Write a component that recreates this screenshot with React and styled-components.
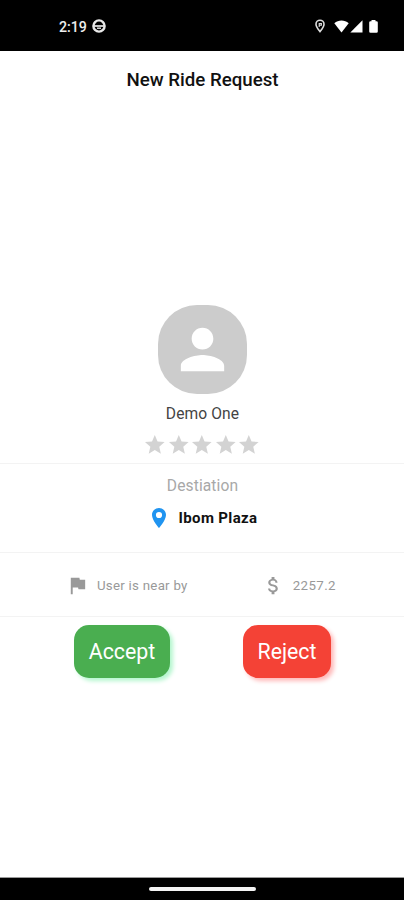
import React from "react";
import styled, { createGlobalStyle } from "styled-components";

const STAR = "M12 17.27L18.18 21l-1.64-7.03L22 9.24l-7.19-.61L12 2 9.19 8.63 2 9.24l5.46 4.73L5.82 21z";
const PERSON = "M12 12c2.21 0 4-1.79 4-4s-1.79-4-4-4-4 1.79-4 4 1.79 4 4 4zm0 2c-2.67 0-8 1.34-8 4v2h16v-2c0-2.66-5.33-4-8-4z";
const PLACE = "M12 2C8.13 2 5 5.13 5 9c0 5.25 7 13 7 13s7-7.75 7-13c0-3.87-3.13-7-7-7zm0 10.1a3.1 3.1 0 0 1 0-6.2 3.1 3.1 0 0 1 0 6.2z";
const FLAG = "M14.4 6L14 4H5v17h2v-7h5.6l.4 2h7V6z";
const MONEY = "M11.8 10.9c-2.27-.59-3-1.2-3-2.15 0-1.09 1.01-1.85 2.7-1.85 1.78 0 2.44.85 2.5 2.1h2.21c-.07-1.72-1.12-3.3-3.21-3.81V3h-3v2.16c-1.94.42-3.5 1.68-3.5 3.61 0 2.31 1.91 3.46 4.7 4.13 2.5.6 3 1.48 3 2.41 0 .69-.49 1.79-2.7 1.79-2.06 0-2.87-.92-2.98-2.1h-2.2c.12 2.19 1.76 3.42 3.68 3.83V21h3v-2.15c1.95-.37 3.5-1.5 3.5-3.55 0-2.84-2.43-3.81-4.7-4.4z";

function Icon ({ path, size, color }) {
    return (
        <svg width={size} height={size} viewBox="0 0 24 24" fill={color} fillRule="evenodd">
            <path d={path} />
        </svg>
    )
}

function StatusIcons () {
    return (
        <StatusGroup>
            <LocationIcon width="10" height="14" viewBox="0 0 10 14" fill="none" stroke="#DDDDDD" strokeWidth="1.6">
                <path d="M5 12.6C3.4 10.5 1 7.8 1 5.2a4 4 0 0 1 8 0C9 7.8 6.6 10.5 5 12.6z" />
                <path d="M4.2 8V4.6h2.2v1.6H4.6" strokeWidth="1.1" />
            </LocationIcon>
            <svg width="15" height="13" viewBox="0 0 15 13" fill="#FFFFFF">
                <path d="M.3 3.3C4.4-.4 10.6-.4 14.7 3.3L7.5 12.5z" />
            </svg>
            <SignalIcon width="13" height="13" viewBox="0 0 13 13" fill="#FFFFFF">
                <path d="M12.5 .3v12.2H.3z" />
            </SignalIcon>
            <svg width="9" height="13" viewBox="0 0 9 13" fill="#FFFFFF">
                <path d="M2.5 0h4v1.2h1A1.3 1.3 0 0 1 8.8 2.5v9A1.3 1.3 0 0 1 7.5 12.8h-6A1.3 1.3 0 0 1 .2 11.5v-9A1.3 1.3 0 0 1 1.5 1.2h1z" />
            </svg>
        </StatusGroup>
    )
}

export default function App () {
    const stars = [1, 2, 3, 4, 5];

    return (
        <>
            <GlobalStyle />
            <Screen>
                <StatusBar>
                    <Clock>
                        <span>2:19</span>
                        <svg width="14" height="14" viewBox="0 0 14 14" fill="none" stroke="#E8E8E8">
                            <circle cx="7" cy="7" r="5.6" strokeWidth="2.4" />
                            <path d="M2 7h10" strokeWidth="1.7" />
                            <path d="M5 9.2h4" strokeWidth="1.4" />
                        </svg>
                    </Clock>
                    <StatusIcons />
                </StatusBar>
                <Header>New Ride Request</Header>
                <Content>
                    <Profile>
                        <Avatar>
                            <Icon path={PERSON} size={65} color="#FFFFFF" />
                        </Avatar>
                        <Name>Demo One</Name>
                        <Stars>
                            {stars.map(star => <Icon key={star} path={STAR} size={23.6} color="#D3D3D3" />)}
                        </Stars>
                    </Profile>
                    <Destination>
                        <Label>Destiation</Label>
                        <Place>
                            <Icon path={PLACE} size={24} color="#2094F0" />
                            <span>Ibom Plaza</span>
                        </Place>
                    </Destination>
                    <Details>
                        <Detail gap={8}>
                            <Icon path={FLAG} size={23} color="#999999" />
                            <DetailText spacing="0.25px">User is near by</DetailText>
                        </Detail>
                        <Detail gap={8}>
                            <Icon path={MONEY} size={23} color="#999999" />
                            <DetailText spacing="0.4px">2257.2</DetailText>
                        </Detail>
                    </Details>
                    <Actions>
                        <Button width={96} color="#4AAE50" shadow="#B4F6CE">Accept</Button>
                        <Button width={88} color="#F44236" shadow="#FFB9B9">Reject</Button>
                    </Actions>
                </Content>
                <NavBar>
                    <Handle />
                </NavBar>
            </Screen>
        </>
    )
}

const GlobalStyle = createGlobalStyle`
    * {
        box-sizing: border-box;
    }

    body {
        margin: 0;
        font-family: Roboto, sans-serif;
    }

    svg {
        display: block;
        flex-shrink: 0;
    }
`

const Screen = styled.div`
    width: 404px;
    height: 900px;
    background: #FFFFFF;
    display: flex;
    flex-direction: column;
    overflow: hidden;
`

const StatusBar = styled.div`
    height: 51px;
    flex-shrink: 0;
    padding: 1px 26px 0 59px;
    background: #000000;
    display: flex;
    align-items: center;
    justify-content: space-between;
`

const Clock = styled.div`
    display: flex;
    align-items: center;
    gap: 5px;
    font-weight: 500;
    font-size: 14.2px;
    line-height: 16px;
    color: #EEEEEE;

    span {
        padding-top: 1px;
    }
`

const StatusGroup = styled.div`
    display: flex;
    align-items: center;
`

const LocationIcon = styled.svg`
    margin-right: 9px;
`

const SignalIcon = styled.svg`
    margin: 0 6px 0 1px;
`

const Header = styled.div`
    height: 57px;
    flex-shrink: 0;
    padding: 1px 0 0 1px;
    font-weight: 500;
    font-size: 18.7px;
    line-height: 56px;
    text-align: center;
    color: #111111;
`

const Content = styled.div`
    flex: 1;
    padding-top: 197px;
`

const Profile = styled.div`
    height: 159px;
    display: flex;
    flex-direction: column;
    align-items: center;
    border-bottom: 1px solid #F3F3F3;
`

const Avatar = styled.div`
    width: 89px;
    height: 89px;
    border-radius: 39px;
    background: #CCCCCC;
    display: flex;
    align-items: center;
    justify-content: center;
`

const Name = styled.div`
    margin-top: 10px;
    padding-left: 1px;
    font-size: 15.6px;
    line-height: 20px;
    letter-spacing: 0.1px;
    color: #444444;
`

const Stars = styled.div`
    margin-top: 9px;
    display: flex;
`

const Destination = styled.div`
    height: 89px;
    padding-top: 12px;
    display: flex;
    flex-direction: column;
    align-items: center;
    border-bottom: 1px solid #F3F3F3;
`

const Label = styled.div`
    padding-left: 1px;
    font-size: 15.6px;
    line-height: 20px;
    letter-spacing: 0.1px;
    color: #A8A8A8;
`

const Place = styled.div`
    margin-top: 10px;
    display: flex;
    align-items: center;
    gap: 8px;
    font-weight: 700;
    font-size: 15px;
    line-height: 24px;
    letter-spacing: 0.35px;
    color: #111111;
`

const Details = styled.div`
    height: 64px;
    padding: 2px 68px 0 66px;
    display: flex;
    align-items: center;
    justify-content: space-between;
    border-bottom: 1px solid #F3F3F3;
`

const Detail = styled.div`
    display: flex;
    align-items: center;
    gap: ${props => props.gap}px;
`

const DetailText = styled.span`
    font-size: 13.3px;
    line-height: 18px;
    letter-spacing: ${props => props.spacing};
    color: #999999;
`

const Actions = styled.div`
    padding: 8px 0 0 1px;
    display: flex;
    justify-content: space-evenly;
`

const Button = styled.button`
    width: ${props => props.width}px;
    height: 53px;
    padding: 0 0 1px;
    border: none;
    border-radius: 15px;
    background: ${props => props.color};
    box-shadow: 3px 3px 4px ${props => props.shadow};
    font-family: Roboto, sans-serif;
    font-size: 21.3px;
    color: #FFFFFF;
`

const NavBar = styled.div`
    height: 23px;
    flex-shrink: 0;
    border-top: 1px solid #9A9A9A;
    background: #000000;
    display: flex;
    align-items: center;
    justify-content: center;
`

const Handle = styled.div`
    width: 107px;
    height: 4px;
    border-radius: 2px;
    background: #F4F4F4;
`
